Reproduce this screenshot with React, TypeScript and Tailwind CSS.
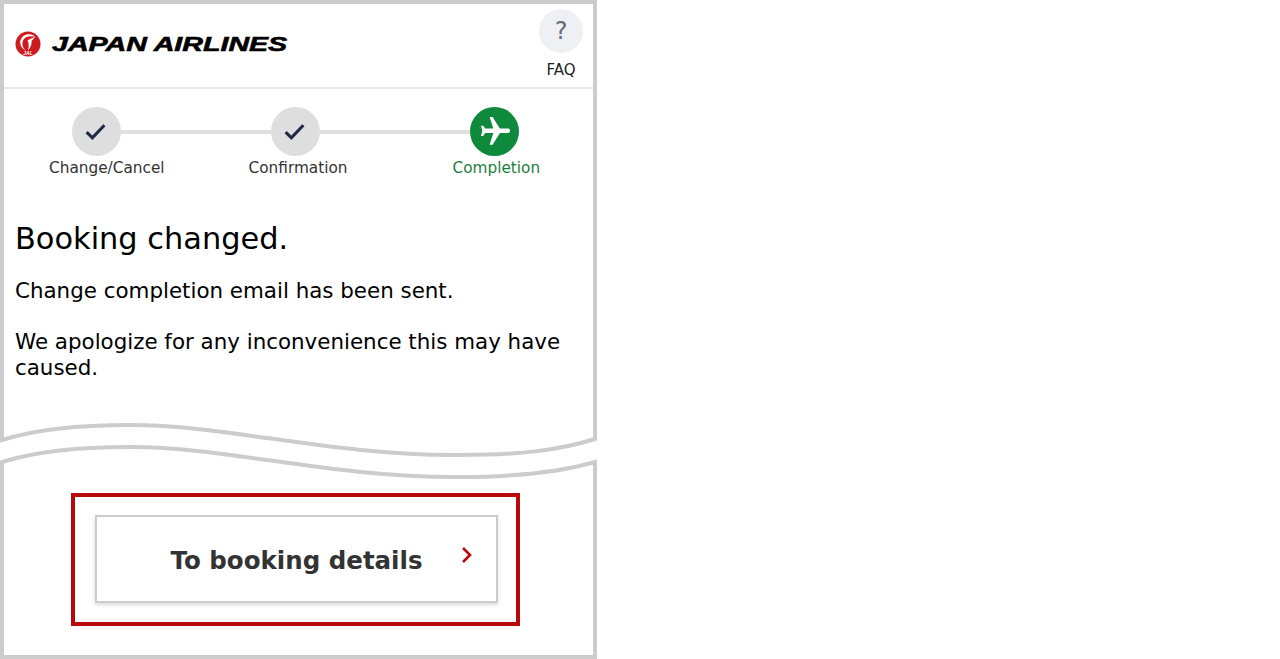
import { MdFlight } from "react-icons/md";

const SANS = "font-['DejaVu_Sans',sans-serif]";

function Check() {
  return (
    <svg viewBox="0 0 24 24" className="w-[25px] h-[25px] -ml-[2px]" fill="none" stroke="#1f2a44" strokeWidth="3" aria-hidden="true">
      <path d="M3.500 12.500l5.500 5.500L20.500 6" />
    </svg>
  );
}

// crane mark, drawn by hand
function JalMark() {
  return (
    <svg viewBox="0 0 26 26" className="w-[26px] h-[26px]" aria-hidden="true">
      <circle cx="13" cy="13" r="12.500" fill="#cf1a20" />
      <path d="M20 5.500C17.800 3.500 15 2.800 12.400 3.300 8 4.100 5 7.800 5.200 12c.2 3.300 2.500 6.200 5.700 7.500-2.300-1.900-3.700-4.500-3.500-7.300C7.700 8.400 10.500 5.600 14.500 5.300z" fill="#fff" />
      <path d="M12.500 9.200l8-3.700-3.900 4.400c.4 3.500-1.200 7-3.600 9.400 1-3.500 1-7-.5-10.100z" fill="#fff" />
      <text x="13" y="24" textAnchor="middle" fontSize="5" fontWeight="700" fontStyle="italic" fill="#fff" fontFamily="Liberation Sans, sans-serif">JAL</text>
    </svg>
  );
}

function StepCircle({ children, active }: { children: React.ReactNode; active?: boolean }) {
  return (
    <div className={`w-[49px] h-[49px] shrink-0 rounded-full flex items-center justify-center ${active ? "bg-[#0f8a3c]" : "bg-[#dedede]"}`}>
      {children}
    </div>
  );
}

export default function App() {
  return (
    <div className={`w-[597px] h-[659px] flex flex-col bg-white ${SANS}`}>
      <div className="h-[423px] border-t-4 border-x-4 border-[#cccccc] flex flex-col">
        {/* header */}
        <header className="h-[85px] shrink-0 border-b-2 border-[#e6e6e6] flex items-start justify-between pl-[11px] pr-[10px]">
          <div className="flex items-center mt-[27px] gap-[11px]">
            <JalMark />
            <span className="font-['Liberation_Sans',sans-serif] font-bold italic text-[20px] leading-[26px] text-black whitespace-nowrap origin-left [transform:scaleX(1.43)] [-webkit-text-stroke:0.6px_black]">
              JAPAN AIRLINES
            </span>
          </div>
          <div className="w-[44px] flex flex-col items-center mt-[5px]">
            <div className="w-[44px] h-[44px] rounded-full bg-[#eef0f4] flex items-center justify-center text-[24px] text-[#666b75]">?</div>
            <span className="mt-[8px] text-[15px] leading-[18px] text-[#222]">FAQ</span>
          </div>
        </header>

        {/* stepper */}
        <div className="flex items-center pl-[68px] pr-[74px] mt-[18px]">
          <StepCircle><Check /></StepCircle>
          <div className="flex-1 h-[4px] bg-[#e0e0e0]" />
          <StepCircle><Check /></StepCircle>
          <div className="flex-1 h-[4px] bg-[#e0e0e0]" />
          <StepCircle active>
            <MdFlight className="w-[35px] h-[35px] ml-[2px] text-white rotate-90" />
          </StepCircle>
        </div>
        <div className="flex text-[15.3px] leading-[20px] mt-[2px] text-[#333] whitespace-nowrap">
          <span className="ml-[45px]">Change/Cancel</span>
          <span className="ml-[84px]">Confirmation</span>
          <span className="ml-[105px] text-[#1a7f3c]">Completion</span>
        </div>

        {/* message */}
        <div className="px-[11px] text-black">
          <h1 className="mt-[41px] text-[30.400px] leading-[40px] font-normal">Booking changed.</h1>
          <p className="mt-[19px] text-[21.400px] leading-[26px]">Change completion email has been sent.</p>
          <p className="mt-[25px] text-[21.400px] leading-[26px]">We apologize for any inconvenience this may have caused.</p>
        </div>
      </div>

      {/* torn edge */}
      <svg viewBox="0 0 597 56" className="w-[597px] h-[56px] block shrink-0" fill="none" stroke="#cccccc" strokeWidth="4" aria-hidden="true">
        <path d="M2 0V17 C40 5 90 2 130 2 C230 2 330 33 460 32 C520 32 560 27 595 16V0" />
        <path d="M2 56V39 C40 27 90 24 130 24 C230 24 330 55 460 54 C520 54 560 49 595 39V56" />
      </svg>

      <div className="flex-1 border-x-4 border-b-4 border-[#cccccc] pl-[67px] pt-[15px]">
        <div className="w-[449px] h-[133px] border-4 border-[#b80a0a] pl-[20px] pt-[18px] -mt-[1px]">
          <button type="button" className="w-[403px] h-[88px] border-2 border-[#cccccc] bg-white shadow-[0_2px_4px_rgba(0,0,0,0.15)] relative flex items-center justify-center text-[24.500px] font-bold text-[#333]">
            <span className="mt-[4px]">To booking details</span>
            <svg viewBox="0 0 12 18" className="absolute right-[23px] top-[29px] w-[12px] h-[18px]" fill="none" stroke="#b80a0a" strokeWidth="2.600" aria-hidden="true">
              <path d="M2 2l7 7-7 7" />
            </svg>
          </button>
        </div>
      </div>
    </div>
  );
}
